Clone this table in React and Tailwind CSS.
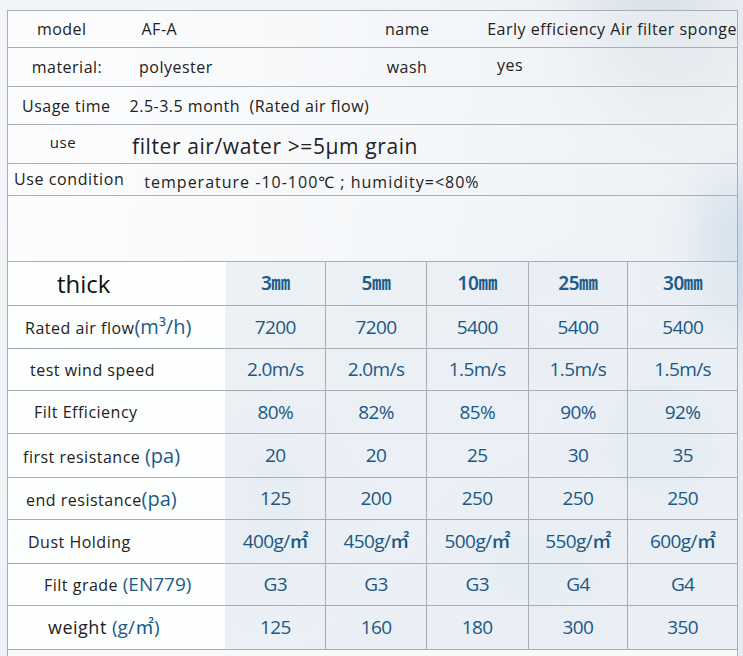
import React from 'react';

const font = { fontFamily: '"Open Sans", "Noto Sans", "Noto Sans CJK SC", sans-serif' };
const cjk = { fontFamily: '"Noto Sans", "Noto Sans CJK SC", sans-serif' };

const cols = ['3㎜', '5㎜', '10㎜', '25㎜', '30㎜'];

const rows = [
    { label: <>Rated air flow<span className="text-[20px] tracking-normal text-[#1d5c8a]">(m³/h)</span></>, pl: 'pl-[17px]', h: 'h-[43px]', values: ['7200', '7200', '5400', '5400', '5400'] },
    { label: 'test wind speed', pl: 'pl-[22px]', h: 'h-[42px]', values: ['2.0m/s', '2.0m/s', '1.5m/s', '1.5m/s', '1.5m/s'] },
    { label: 'Filt Efficiency', pl: 'pl-[26px]', h: 'h-[43px]', values: ['80%', '82%', '85%', '90%', '92%'] },
    { label: <>first resistance <span className="text-[20px] tracking-normal text-[#1d5c8a]">(pa)</span></>, pl: 'pl-[15px]', h: 'h-[44px]', values: ['20', '20', '25', '30', '35'] },
    { label: <>end resistance<span className="text-[20px] tracking-normal text-[#1d5c8a]">(pa)</span></>, pl: 'pl-[18px]', h: 'h-[42px]', values: ['125', '200', '250', '250', '250'] },
    { label: 'Dust Holding', pl: 'pl-[20px]', h: 'h-[44px]', values: ['400g/㎡', '450g/㎡', '500g/㎡', '550g/㎡', '600g/㎡'] },
    { label: <>Filt grade <span className="text-[19px] tracking-normal text-[#1d5c8a]">(EN779)</span></>, pl: 'pl-[36px]', h: 'h-[42px]', values: ['G3', 'G3', 'G3', 'G4', 'G4'] },
    { label: <span className="text-[18px]">weight <span className="text-[19px] tracking-normal text-[#1d5c8a]">(g/㎡)</span></span>, pl: 'pl-[40px]', h: 'h-[44px]', values: ['125', '160', '180', '300', '350'] },
];

const widths = ['w-[100px]', 'w-[101px]', 'w-[102px]', 'w-[100px]', 'w-[110px]'];

const App = () => {
    return (
        <div className="relative w-[743px] h-[656px] overflow-hidden bg-gradient-to-br from-[#f3f6f9] via-[#eef2f6] to-[#e6edf3] text-[#222]" style={font}>
            {/* blurry bubbles in the background */}
            <div className="absolute left-[580px] top-[-30px] w-[150px] h-[130px] rounded-full bg-[#c4ced9] opacity-60 blur-2xl" />
            <div className="absolute left-[495px] top-[262px] w-[110px] h-[110px] rounded-full border-[10px] border-[#cfdbe6] opacity-70 blur-md" />
            <div className="absolute left-[700px] top-[180px] w-[60px] h-[150px] rounded-full bg-[#b3c9dd] opacity-70 blur-xl" />
            <div className="absolute left-[600px] top-[380px] w-[120px] h-[120px] rounded-full bg-[#d3dee8] opacity-60 blur-xl" />
            <div className="absolute left-[470px] top-[520px] w-[140px] h-[100px] rounded-full bg-[#d8e2ea] opacity-50 blur-xl" />
            <div className="absolute left-[230px] top-[420px] w-[90px] h-[160px] rounded-full bg-[#d5dfe8] opacity-50 blur-xl" />

            <div className="relative ml-[7px] mt-[10px] w-[731px] border-t border-l border-r border-[#a9aeb4]">
                {/* top info rows */}
                <div className="bg-gradient-to-r from-[#fdfdfe] via-[#f6f8fa]/80 to-[#eef2f5]/40 text-[16px] tracking-[0.5px]">
                    <div className="flex items-center h-[37px] border-b border-[#a9aeb4]">
                        <span className="w-[108px] text-center">model</span>
                        <span className="ml-[26px] w-[232px]">AF-A</span>
                        <span className="w-[70px] text-center">name</span>
                        <span className="ml-[45px] whitespace-nowrap">Early efficiency Air filter sponge</span>
                    </div>
                    <div className="flex items-center h-[39px] border-b border-[#a9aeb4]">
                        <span className="w-[118px] text-center">material:</span>
                        <span className="ml-[13px] w-[232px]">polyester</span>
                        <span className="w-[72px] text-center">wash</span>
                        <span className="ml-[54px] -mt-[5px]">yes</span>
                    </div>
                    <div className="flex items-center h-[38px] border-b border-[#a9aeb4]">
                        <span className="ml-[14px]">Usage time</span>
                        <span className="ml-[19px]">2.5-3.5 month&nbsp;&nbsp;(Rated air flow)</span>
                    </div>
                    <div className="flex items-center h-[39px] border-b border-[#a9aeb4]">
                        <span className="w-[110px] text-center text-[15px] -mt-[4px]">use</span>
                        <span className="ml-[14px] mt-[6px] text-[21px] tracking-[0.6px]">filter air/water &gt;=5μm grain</span>
                    </div>
                    <div className="flex items-center h-[32px] border-b border-[#a9aeb4]">
                        <span className="ml-[6px] -mt-[2px] tracking-[0.6px]">Use condition</span>
                        <span className="ml-[20px] mt-[5px] tracking-[1px]">temperature -10-100℃ ; humidity=&lt;80%</span>
                    </div>
                    <div className="h-[66px] border-b border-[#a9aeb4]" />
                </div>

                {/* spec table */}
                <div className="flex h-[44px] border-b border-[#a9aeb4]">
                    <div className="w-[218px] flex items-center pl-[49px] bg-[#fdfefe] text-[24px] text-[#111]">thick</div>
                    {cols.map((c, i) => (
                        <div key={c} className={`${widths[i]} ${i > 0 ? 'border-l border-[#a9aeb4]' : ''} flex items-center justify-center bg-[#e9f0f5]/70 text-[19px] font-semibold text-[#1d5c8a] tracking-tight`} style={cjk}>
                            {c}
                        </div>
                    ))}
                </div>
                {rows.map((r, ri) => (
                    <div key={ri} className={`flex ${r.h} border-b border-[#a9aeb4]`}>
                        <div className={`w-[218px] flex items-center ${r.pl} bg-[#fdfefe] text-[16px] tracking-[0.5px] text-[#222] whitespace-nowrap`}>
                            <span>{r.label}</span>
                        </div>
                        {r.values.map((v, i) => (
                            <div key={i} className={`${widths[i]} ${i > 0 ? 'border-l border-[#a9aeb4]' : ''} flex items-center justify-center bg-[#e9f0f5]/70 text-[19px] font-medium text-[#1b5884] tracking-[-0.6px]`}>
                                {v}
                            </div>
                        ))}
                    </div>
                ))}
                <div className="h-[10px] bg-[#f7f9fb]" />
            </div>
        </div>
    );
};

export default App;
